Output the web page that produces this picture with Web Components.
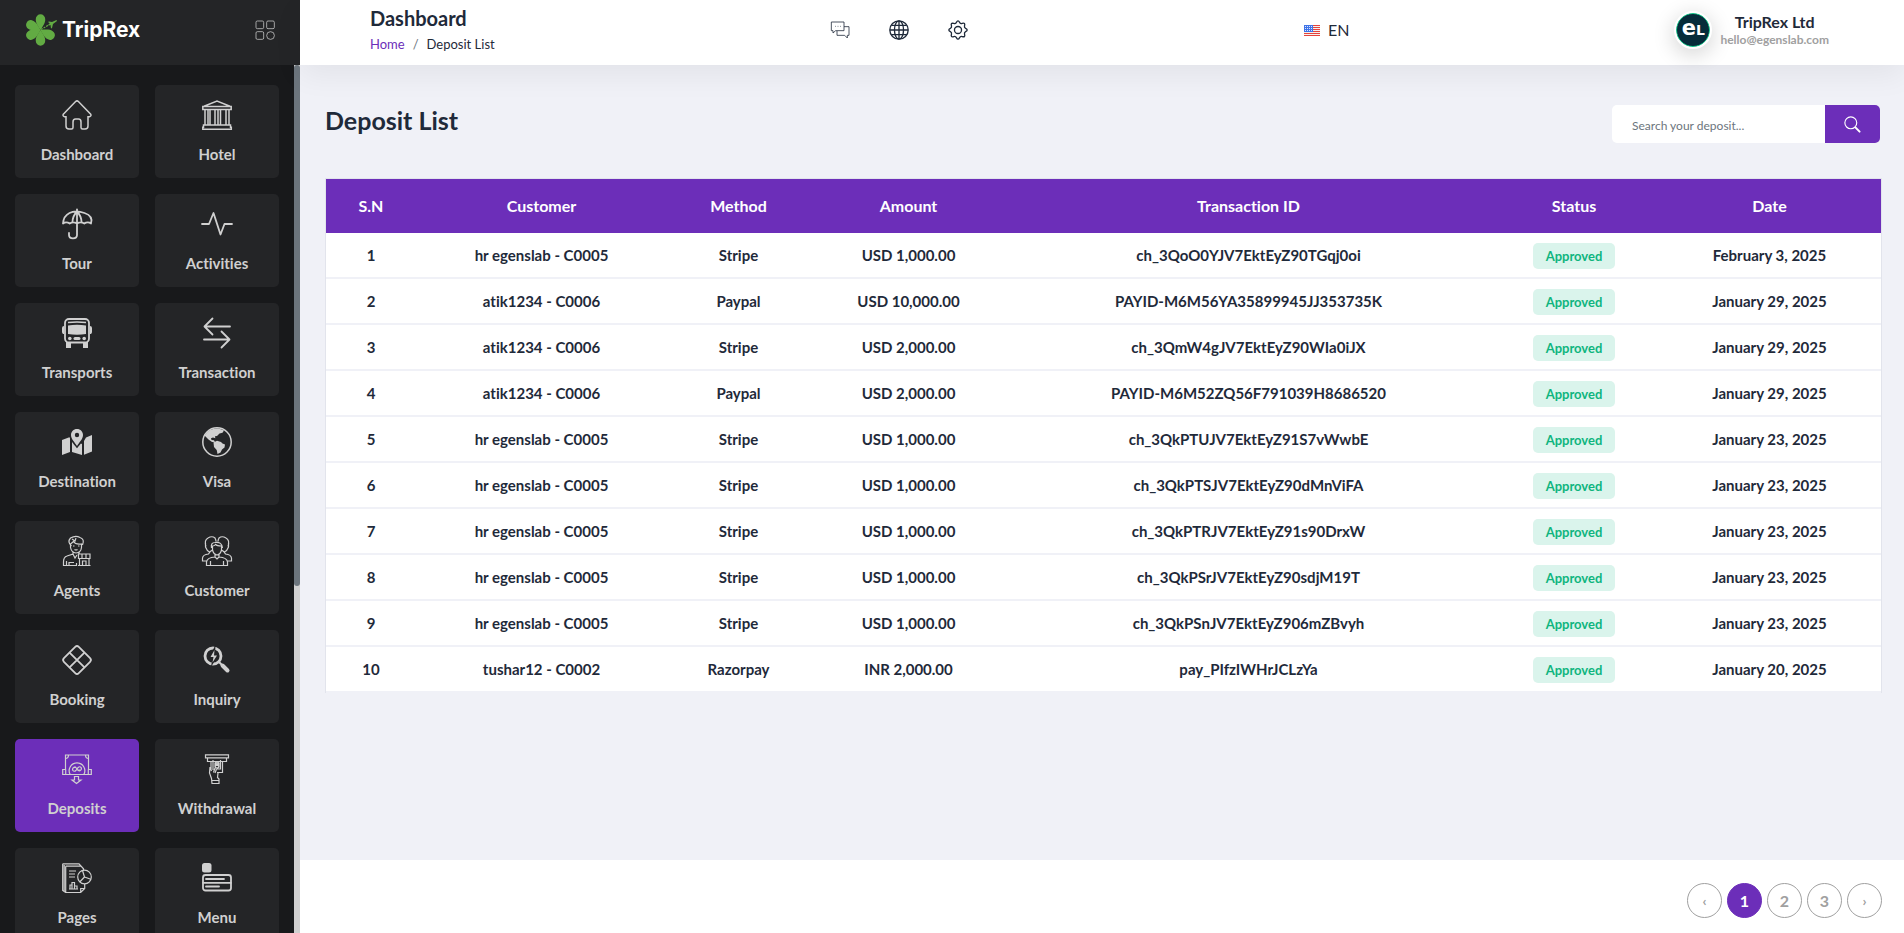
<!DOCTYPE html>
<html lang="en">
<head>
<meta charset="utf-8">
<title>Deposit List</title>
<style>
  :root {
    --purple: #6c2eb9;
    --ink: #1f2a3a;
    --page: #f0f1f7;
    --side: #18191b;
    --tile: #242527;
    --tile-ink: #d0d0d0;
  }
  body { margin: 0; font-family: Lato, "Liberation Sans", sans-serif; font-variant-ligatures: none; color: var(--ink); }
</style>
</head>
<body>
<app-shell>
  <side-bar slot="side">
    <nav-tile icon="home">Dashboard</nav-tile>
    <nav-tile icon="bank">Hotel</nav-tile>
    <nav-tile icon="umbrella">Tour</nav-tile>
    <nav-tile icon="activity">Activities</nav-tile>
    <nav-tile icon="bus">Transports</nav-tile>
    <nav-tile icon="swap">Transaction</nav-tile>
    <nav-tile icon="map">Destination</nav-tile>
    <nav-tile icon="earth">Visa</nav-tile>
    <nav-tile icon="agent">Agents</nav-tile>
    <nav-tile icon="people">Customer</nav-tile>
    <nav-tile icon="diamond">Booking</nav-tile>
    <nav-tile icon="inquiry">Inquiry</nav-tile>
    <nav-tile icon="deposit" active>Deposits</nav-tile>
    <nav-tile icon="withdraw">Withdrawal</nav-tile>
    <nav-tile icon="pages">Pages</nav-tile>
    <nav-tile icon="menu">Menu</nav-tile>
  </side-bar>
  <top-bar slot="top"></top-bar>
  <list-head>Deposit List</list-head>
  <deposit-table></deposit-table>
  <page-nav slot="foot"></page-nav>
</app-shell>

<script>
const ICONS = {
  home: `<path d="M1.3 14.2 13.6 1.5q1.4-1.3 2.8 0L28.7 14.2q1 1.9-1.2 2.5H26V26q0 3-3 3h-2.500q-1.500 0-1.500-1.500V22q0-3-2.500-3h-3Q11 19 11 22v5.500Q11 29 9.500 29H7q-3 0-3-3v-9.300H2.500q-2.200-.6-1.200-2.500Z" class="w15"/>`,
  bank: `<g class="w15"><path d="M2 6.200 15 1l13 5.200M.8 6.500h28.400v3H.8zM1.500 25h27v2.200H29.300V29.200H.8v-2H1.500zM3 9.500V25M6 9.500V25M8 9.500V25M13 9.500V25M16 9.500V25M18.500 9.500V25M24 9.500V25M27 9.500V25"/></g>`,
  umbrella: `<g class="w17"><path d="M15 .3V26q0 3.300-4 3.300t-4-3.300v-2M1 14.500Q1.500 7 7.500 4t15 0T29 14.500q-1.500-1.200-3.300-1.200t-3.400 1.200q-2-1.200-3.700-1.200t-3.600 1.200q-2-1.200-3.700-1.200T7.700 14.500Q6 13.300 4.300 13.300T1 14.500ZM15 2.500Q10.500 7 10.500 13.300M15 2.500q4.500 4.500 4.500 10.800"/></g>`,
  activity: `<path class="w17" d="M0 15h7L11.500 4 18.500 25.500 22.500 15H30"/>`,
  bus: `<rect class="w17" x="3" y="1" width="24" height="23.500" rx="4"/><path class="f" d="M0 10q0-2 2-2v8H1q-1-1-1-2zM30 10q0-2-2-2v8h1q1-1 1-2zM4 24h5v6H4zM21 24h5v6h-5zM6 7.500q9-1.500 18 0v8.500q-9 1.500-18 0z"/><path class="w15" d="M6 4.500q9-1.200 18 0"/><circle class="f" cx="7.800" cy="20.500" r="1.800"/><circle class="f" cx="22.200" cy="20.500" r="1.800"/><rect class="f" x="11.500" y="19" width="7" height="3" rx="1.500"/>`,
  swap: `<path class="w17" d="M28 8.500H3M10.500.5 2.500 8.500l8 8M2 21.500h25M19.500 13.500l8 8-8 8"/>`,
  map: `<path class="f" d="M0 13l8-3v15l-8 3zM10 12.500l10 9V28l-10-3zM20 17l0 11-10-3V12zM22 14v13.800l8-3.300V8l-6 2.500z"/><path d="M15 1.500c-3.800 0-6.800 3-6.800 6.600 0 4.400 4.600 8.400 6.800 11.400 2.200-3 6.800-7 6.800-11.400 0-3.600-3-6.600-6.800-6.600z" fill="var(--tile)" stroke="var(--tile)" stroke-width="2.200"/><path class="f" fill-rule="evenodd" d="M15 2c-3.500 0-6 2.700-6 6 0 4.300 4 7.500 6 11 2-3.500 6-6.700 6-11 0-3.300-2.500-6-6-6zm0 3.800a2.200 2.200 0 1 1 0 4.400 2.200 2.200 0 0 1 0-4.400z"/>`,
  earth: `<circle class="w15" cx="15" cy="15" r="14.200"/><path class="f" d="M2.500 8.500Q7 1 16 1.500q3 .5 6 2l-1.500 2.200-3 .8-2.500 2.500-2 .3.300 2-2.300-.8-2 .8.500 1.700 2.500.3 1 2-3-.3-3.500-2.500zM11.500 15.500l3.500-1.700 4 1.200 1.500 1.500 2.500 1-.5 3-2.500 2-1.500 3-3 1.500-.8-4-2.700-3z"/>`,
  agent: `<g class="w1"><path d="M9.500 10Q5 6 8.500 2q5-3 9.500-.5 5 1.500 2.500 7.500M8.500 8v3.500q1 5 5.500 5.500 5-.5 5.500-5.500V8q-6 1-8-2.500L8.500 8ZM10 3l3 2 1-3M11 10h1.500M16 10h1.500M12.500 13.500q1.500 1 3 0M11 16v2l-6 2q-3.500 1-3.500 6v3.500h13V27M16 19l1.500-2.500M11 18l2 4 2-3M4.500 29v-4M7 29v-2.500h5M16.500 18h11.500v4.500H16.500zM20 18v4M24 18v4M17.500 22.500V29M27 22.500V29M16 29.500h12.500M20.500 29v-4H24v4"/></g>`,
  people: `<g class="w1"><path d="M10.500 14Q8 15 6.500 18q-5.500.5-6 4v3H5M19.500 14q2.500 1 4 4 5.500.5 6 4v3H25M4 10.500Q2 4 6 2q4-2.500 7 0 1 2 1 3.500M26 10.500Q28 4 24 2q-4-2.500-7 0-1 2-1 3.500M3.500 7v4q1.500 4 4 5M26.500 7v4q-1.500 4-4 5M10.500 10v4q1 4.500 4.500 5 3.500-.5 4.500-5v-4q-4.500 0-6-1.500-1 1.500-3 1.500Zm-1 2Q8.500 6.500 13 6.500q7-1 7.500 5.500M13 19v2q-8 .5-8.500 5v3.500h21V26q-.5-4.500-8.500-5v-2M13 21l2 2 2-2M8.500 25v4M21.500 25v4"/></g>`,
  diamond: `<g class="w17"><rect x="4.500" y="4.500" width="21" height="21" rx="2.500" transform="rotate(45 15 15)"/><path d="M7.800 7.800l14.400 14.400M22.200 7.800 7.800 22.200"/></g>`,
  inquiry: `<circle cx="11" cy="11" r="8" class="s" stroke-width="2.800"/><path class="s" stroke-width="4" stroke-linecap="round" d="M20.500 20.500 25.500 25.500"/><path class="s" stroke-width="2" d="M16.500 16.500l4 4"/><path d="M13.500 0 7 12.500h3.500L9 22l7.500-12H13z" fill="var(--tile)"/><path class="f" d="M12.500 5 8.500 12h3L10.500 17.500 15 10.500h-3z"/>`,
  deposit: `<g class="w1"><path d="M3.500 16V1h23v15M3.500 4.500q3 0 3-3.500M26.500 4.500q-3 0-3-3.500M3.700 15.500h-3V20.500h28.600v-5h-3M3.700 15.500v5M26.300 15.500v5M8.200 20.500a7.800 7.800 0 1 1 13.600 0M15 14.800q-1.500-2-3-1.500-2 1-1.200 3 1.500 1.800 3 .2l2.400-3q1.500-1.600 3 .2.800 2-1.200 3-1.500.500-3-1.500M13.500 12.500l-1 1.500M17.500 15.500l-1 1.500M12.500 22.500h4v3.500H19l-4.500 3.500-4.500-3.500h2.500z"/></g>`,
  withdraw: `<g class="w1"><path d="M3.500.8h23v3h-23zM5.500 4v3.500h19V4M9 7.500V15M20.500 7.500V18.500H15M11 6V16M18.500 6v9H15M13 8.500l4 4M17 8.500l-4 4M13 9q2-2 4 0v4q-2 2-4 0zM8 13l-.5 6 2 5.500.5 5h7V25l-1.500-1.500.5-4.500M8 13l1.500 4M13 14l-1.500 4.500M14.500 15l-1.500 4M10 26.500h7"/></g>`,
  pages: `<g class="w1"><path d="M.7.8H17l4.500 5v2M.7.800V27.500l3 2M3.700 3.200h15.500M3.700 3.200V29.500h15l4-4V21M18.700 29.500v-4h4M2.200 2v26M7 8h7M7 11h6M7 14h6M7 26h9M8 26v-4h2v4M10 26v-6.500h2.500V26M12.500 26v-3H15v3"/><circle cx="22.500" cy="14" r="6.800"/><path d="M22.500 14l-2-6.500M22.500 14l6.300 2.300M22.500 14l-4.800 5"/></g>`,
  menu: `<rect class="f" width="9.500" height="9.500" rx="2.500"/><rect class="w17" x="1" y="12" width="28" height="15.500" rx="2.500"/><path class="w17" d="M1 19.800h28M4 16h18M4 23.500h13"/>`,
  apps: `<g class="w1"><rect x="1.500" y="1.500" width="11.500" height="11.500" rx="2"/><rect x="17.500" y="1.500" width="11.500" height="11.500" rx="2"/><rect x="1.500" y="17.500" width="11.500" height="11.500" rx="2"/><circle cx="23.300" cy="23.300" r="5.800"/></g>`,
  chat: `<g class="w1"><path d="M2 3h19v13H8.500l-4 3.500V16H2zM21 10h7.500v13H26v4l-4-4H10.500v-6.500"/><path d="M8 9.500h1M11.500 9.500h1M15 9.500h1"/></g>`,
  globe: `<g class="s" stroke-width="2"><circle cx="15" cy="15" r="13.800"/><ellipse cx="15" cy="15" rx="6.800" ry="13.800"/><path d="M15 1.500v27M1.500 15h27M4 8h22M4 22h22"/></g>`,
  gear: `<g class="s" stroke-width="2" stroke-linejoin="round"><circle cx="15" cy="15" r="5.300"/><path d="M12.600 3.600q2.400-4.700 4.800 0 1.300 2.400 3.900 1.600 5-1.600 3.500 3.500-.8 2.600 1.600 3.900 4.700 2.400 0 4.800-2.400 1.300-1.600 3.900 1.600 5-3.500 3.500-2.600-.8-3.900 1.600-2.400 4.700-4.800 0-1.300-2.400-3.900-1.600-5 1.600-3.500-3.500.8-2.600-1.600-3.900-4.700-2.400 0-4.800 2.400-1.300 1.600-3.900-1.600-5 3.500-3.500 2.600.8 3.900-1.600Z"/></g>`,
  search: `<circle class="s" stroke-width="2" cx="12" cy="12" r="10.500"/><path class="s" stroke-width="3.500" stroke-linecap="round" d="M20.500 20.500l7 7"/>`
};

const define = (name, markup, setup) => {
  const template = document.createElement('template');
  template.innerHTML = markup;
  customElements.define(name, class extends HTMLElement {
    connectedCallback() {
      if (this.shadowRoot) return;
      const root = this.attachShadow({ mode: 'open' });
      root.append(template.content.cloneNode(true));
      if (setup) setup(this, root);
    }
  });
};

define('ui-icon', `
<style>
  :host { display: block; width: 30px; height: 30px; flex: none; }
  svg { display: block; width: 100%; height: 100%; fill: none; overflow: visible; }
  .f { fill: currentColor; }
  .s, .w1, .w15, .w17 { stroke: currentColor; }
  .w1 { stroke-width: 1.200; }
  .w15 { stroke-width: 1.500; }
  .w17 { stroke-width: 1.800; stroke-linecap: round; stroke-linejoin: round; }
</style>
<svg viewBox="0 0 30 30" aria-hidden="true"></svg>`,
(el, root) => { root.querySelector('svg').innerHTML = ICONS[el.getAttribute('name')]; });

define('app-shell', `
<style>
  :host { display: grid; grid-template-columns: 300px minmax(0, 1fr); min-height: 100vh; background: var(--page); }
  .side { position: sticky; top: 0; height: 100vh; }
  .main { display: flex; flex-direction: column; min-height: 100vh; }
  main { flex: 1; padding: 40px 24px 24px 25px; }
</style>
<div class="side"><slot name="side"></slot></div>
<div class="main">
  <slot name="top"></slot>
  <main><slot></slot></main>
  <slot name="foot"></slot>
</div>`);

define('side-bar', `
<style>
  :host { display: flex; flex-direction: column; height: 100%; background: var(--side); }
  header { display: flex; align-items: center; justify-content: space-between; height: 65px; flex: none;
    box-sizing: border-box; padding: 0 25px 5px; background: var(--tile); }
  .logo { display: flex; align-items: center; gap: 5px; color: #fff; text-decoration: none;
    font: 700 21px/30px Inter, sans-serif; }
  .logo svg { width: 32px; height: 32px; }
  button { border: 0; padding: 0; background: none; color: #c4c4c4; }
  button ui-icon { width: 20px; height: 20px; }
  .body { display: flex; flex: 1; min-height: 0; }
  nav { flex: 1; min-width: 0; overflow-y: auto; scrollbar-width: none; box-sizing: border-box; padding: 20px 15px;
    display: grid; grid-template-columns: 1fr 1fr; grid-auto-rows: 93px; gap: 16px; }
  .track { width: 6px; background: #d0d0d0; }
  .thumb { height: 60%; border-radius: 3px; background: #6c757d; }
</style>
<header>
  <a class="logo" href="#">
    <svg viewBox="0 0 32 32" aria-hidden="true">
      <g fill="#62ab43">
        <path d="M15.500 16C12 11 10.500 8 10.800 5a4.700 4.700 0 0 1 9.400 0c.3 3-1.200 6-4.700 11z"/>
        <path d="M15.500 16C12 11 10.500 8 10.800 5a4.700 4.700 0 0 1 9.400 0c.3 3-1.200 6-4.700 11z" transform="rotate(180 15.500 16)"/>
        <path d="M15.500 16C12 11 10.500 8 10.800 5a4.700 4.700 0 0 1 9.400 0c.3 3-1.200 6-4.700 11z" transform="rotate(-62 15.500 16)"/>
        <path d="M15.500 16C12 11 10.500 8 10.800 5a4.700 4.700 0 0 1 9.400 0c.3 3-1.200 6-4.700 11z" transform="rotate(-118 15.500 16)"/>
        <path d="M15.500 16C12 11 10.500 8 10.800 5a4.700 4.700 0 0 1 9.400 0c.3 3-1.200 6-4.700 11z" transform="rotate(118 15.500 16)"/>
        <path d="M25 9.500 23 8l1-.6 3 .6L31.500 6l.5 1-4 3-1 4-1 .5-.5-3.500-2.500.5z"/>
      </g>
      <path d="M16 15.500 26 9.500" stroke="#62ab43" stroke-width="1.200" stroke-dasharray="2 1"/>
    </svg>
    <span>TripRex</span>
  </a>
  <button type="button" aria-label="Toggle menu"><ui-icon name="apps"></ui-icon></button>
</header>
<div class="body">
  <nav aria-label="Main"><slot></slot></nav>
  <div class="track"><div class="thumb"></div></div>
</div>`);

define('nav-tile', `
<style>
  :host { display: block; }
  a { display: flex; flex-direction: column; align-items: center; gap: 12px; height: 93px; box-sizing: border-box;
    padding-top: 15px; border-radius: 5px; background: var(--tile); color: var(--tile-ink); text-decoration: none;
    font-size: 15px; line-height: 24px; font-weight: 700; }
  :host([active]) a { background: var(--purple); }
</style>
<a href="#"><span><slot></slot></span></a>`,
(el, root) => {
  const icon = document.createElement('ui-icon');
  icon.setAttribute('name', el.getAttribute('icon'));
  root.querySelector('a').prepend(icon);
});

define('top-bar', `
<style>
  :host { display: grid; grid-template-columns: 460fr 474fr 525fr; align-items: center; height: 65px; box-sizing: border-box;
    padding: 0 75px 5px 70px; background: #fff; box-shadow: 0 10px 30px rgba(0, 0, 0, .06); position: relative; }
  h2 { margin: 0; font-size: 20px; line-height: 28px; font-weight: 700; }
  ol { display: flex; gap: 8px; margin: 0; padding: 0; list-style: none; font-size: 13px; line-height: 24px; }
  li + li::before { content: "/"; margin-right: 8px; color: #6c757d; }
  a { color: var(--purple); text-decoration: none; }
  .tools { display: flex; gap: 39px; }
  button { display: flex; align-items: center; border: 0; padding: 0; background: none; font: inherit; color: inherit; }
  .tools ui-icon { width: 20px; height: 20px; }
  .lang { gap: 8px; font-size: 16px; line-height: 24px; }
  .lang svg { width: 16px; height: 11px; }
  .right { display: flex; justify-content: space-between; align-items: center; }
  .user { display: flex; align-items: center; gap: 10px; text-align: center; }
  .face { width: 32px; height: 32px; border: 1px solid #10c98a; border-radius: 50%; background: #062c3a; color: #fff;
    outline: 2px solid #fff; box-shadow: 0 5px 20px 4px rgba(0, 0, 0, .15); font: 700 21px/28px "DejaVu Sans", sans-serif;
    display: flex; align-items: baseline; justify-content: center; }
  .face small { font-size: 14px; }
  .name { display: block; font-size: 16px; line-height: 20px; font-weight: 700; }
  .mail { display: block; font-size: 12px; line-height: 16px; font-weight: 700; color: #a0a0a0; }
</style>
<div>
  <h2>Dashboard</h2>
  <ol><li><a href="#">Home</a></li><li>Deposit List</li></ol>
</div>
<div class="tools">
  <button type="button" aria-label="Messages"><ui-icon name="chat"></ui-icon></button>
  <button type="button" aria-label="Website"><ui-icon name="globe"></ui-icon></button>
  <button type="button" aria-label="Settings"><ui-icon name="gear"></ui-icon></button>
</div>
<div class="right">
  <button type="button" class="lang">
    <svg viewBox="0 0 16 11" aria-hidden="true">
      <path fill="#f6f0ee" d="M0 0h16v11H0z"/>
      <path stroke="#e5433c" d="M0 .5h16M0 2.500h16M0 4.500h16M0 6.500h16M0 8.500h16M0 10.500h16"/>
      <path fill="#3f74e8" d="M0 0h9v7H0z"/>
      <path stroke="#dbe5ff" stroke-dasharray="1 1" d="M1 1.500h7M1 3.500h7M1 5.500h7"/>
    </svg>EN</button>
  <div class="user">
    <div class="face">e<small>L</small></div>
    <div><span class="name">TripRex Ltd</span><span class="mail">hello@egenslab.com</span></div>
  </div>
</div>`);

define('list-head', `
<style>
  :host { display: flex; justify-content: space-between; align-items: flex-start; margin-bottom: 35px; }
  h1 { margin: 0; font-size: 25px; line-height: 30px; font-weight: 700; }
  form { display: flex; width: 268px; height: 38px; border-radius: 5px; overflow: hidden; background: #fff; }
  input { flex: 1; min-width: 0; border: 0; padding: 4px 20px 0; background: none; font: 12px/20px Lato, sans-serif; color: var(--ink); outline: 0; }
  input::placeholder { color: #6c757d; opacity: 1; }
  button { display: grid; place-items: center; width: 55px; border: 0; padding: 0; background: var(--purple); color: #fff; }
  ui-icon { width: 17px; height: 17px; }
</style>
<h1><slot></slot></h1>
<form role="search">
  <input type="search" aria-label="Search your deposit" placeholder="Search your deposit...">
  <button type="button" aria-label="Search"><ui-icon name="search"></ui-icon></button>
</form>`);

const DEPOSITS = [
  ['hr egenslab - C0005', 'Stripe', 'USD 1,000.00', 'ch_3QoO0YJV7EktEyZ90TGqj0oi', 'February 3, 2025'],
  ['atik1234 - C0006', 'Paypal', 'USD 10,000.00', 'PAYID-M6M56YA35899945JJ353735K', 'January 29, 2025'],
  ['atik1234 - C0006', 'Stripe', 'USD 2,000.00', 'ch_3QmW4gJV7EktEyZ90WIa0iJX', 'January 29, 2025'],
  ['atik1234 - C0006', 'Paypal', 'USD 2,000.00', 'PAYID-M6M52ZQ56F791039H8686520', 'January 29, 2025'],
  ['hr egenslab - C0005', 'Stripe', 'USD 1,000.00', 'ch_3QkPTUJV7EktEyZ91S7vWwbE', 'January 23, 2025'],
  ['hr egenslab - C0005', 'Stripe', 'USD 1,000.00', 'ch_3QkPTSJV7EktEyZ90dMnViFA', 'January 23, 2025'],
  ['hr egenslab - C0005', 'Stripe', 'USD 1,000.00', 'ch_3QkPTRJV7EktEyZ91s90DrxW', 'January 23, 2025'],
  ['hr egenslab - C0005', 'Stripe', 'USD 1,000.00', 'ch_3QkPSrJV7EktEyZ90sdjM19T', 'January 23, 2025'],
  ['hr egenslab - C0005', 'Stripe', 'USD 1,000.00', 'ch_3QkPSnJV7EktEyZ906mZBvyh', 'January 23, 2025'],
  ['tushar12 - C0002', 'Razorpay', 'INR 2,000.00', 'pay_PIfzIWHrJCLzYa', 'January 20, 2025']
];

define('status-badge', `
<style>
  :host { display: inline-block; padding: 0 13px; border-radius: 5px; background: #daf4ec; color: #0fb57e;
    font-size: 13px; line-height: 26px; font-weight: 700; vertical-align: middle; }
</style><slot></slot>`);

define('deposit-table', `
<style>
  :host { display: block; }
  table { width: 100%; table-layout: fixed; border-collapse: separate; border-spacing: 0; border: 1px solid #e2e4ec;
    border-bottom: 0; text-align: center; font-size: 15px; line-height: 24px; font-weight: 700; }
  th, td { padding: 0; }
  th { height: 54px; background: var(--purple); color: #fff; font-size: 16px; }
  td { height: 44px; background: #fff; border-bottom: 2px solid var(--page); }
</style>
<table>
  <colgroup>
    <col style="width: 90px"><col style="width: 251px"><col style="width: 143px"><col style="width: 197px">
    <col style="width: 483px"><col style="width: 168px"><col style="width: 223px">
  </colgroup>
  <thead><tr><th>S.N</th><th>Customer</th><th>Method</th><th>Amount</th><th>Transaction ID</th><th>Status</th><th>Date</th></tr></thead>
  <tbody></tbody>
</table>`,
(el, root) => {
  root.querySelector('tbody').innerHTML = DEPOSITS.map(([who, how, sum, id, date], i) =>
    `<tr><td>${i + 1}</td><td>${who}</td><td>${how}</td><td>${sum}</td><td>${id}</td><td><status-badge>Approved</status-badge></td><td>${date}</td></tr>`).join('');
});

define('page-nav', `
<style>
  :host { display: flex; justify-content: flex-end; box-sizing: border-box; height: 73px; padding: 23px 22px 15px; background: #fff; }
  nav { display: flex; gap: 5px; }
  a { width: 35px; height: 35px; box-sizing: border-box; border: 1px solid #a0a0a0; border-radius: 50%; text-align: center;
    color: #a0a0a0; text-decoration: none; font-size: 16px; line-height: 33px; font-weight: 700; }
  a.step { font-size: 14px; }
  a[aria-current] { border-color: var(--purple); background: var(--purple); color: #fff; }
</style>
<nav aria-label="Pages">
  <a class="step" href="#" aria-label="Previous">‹</a>
  <a href="#" aria-current="page">1</a>
  <a href="#">2</a>
  <a href="#">3</a>
  <a class="step" href="#" aria-label="Next">›</a>
</nav>`);
</script>
</body>
</html>
